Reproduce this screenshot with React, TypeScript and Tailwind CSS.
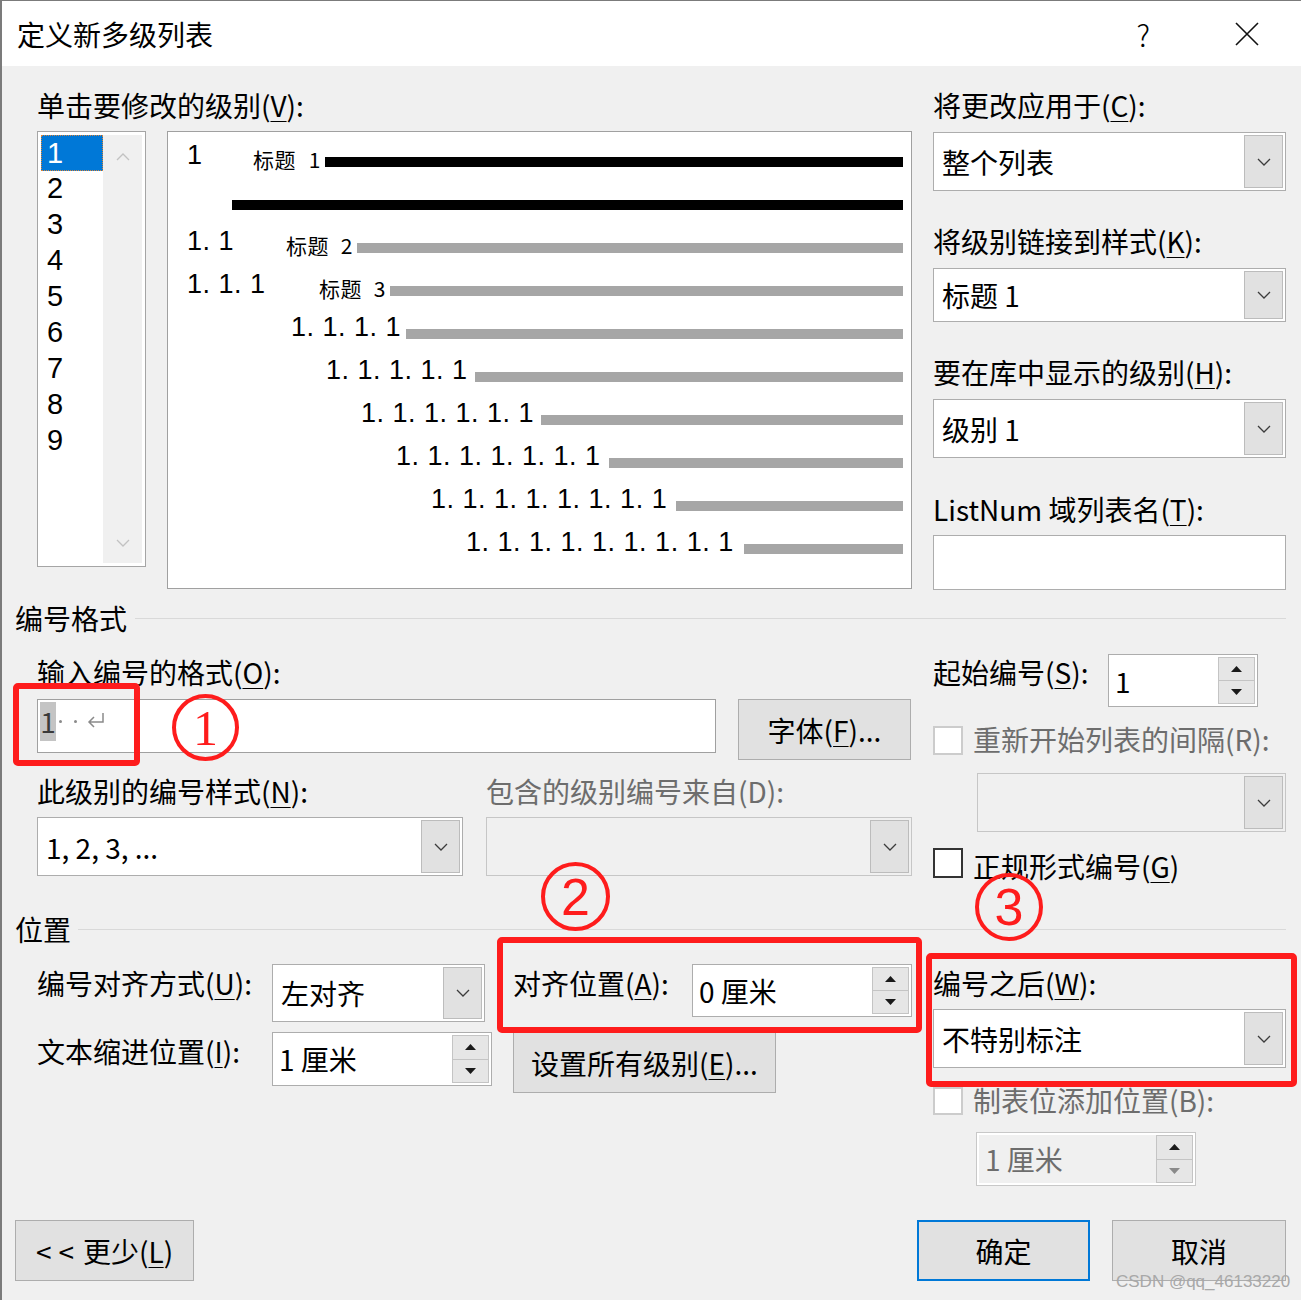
import React from "react";

const U = ({ children }: { children: React.ReactNode }) => (
  <span className="underline decoration-1 underline-offset-[4px]">{children}</span>
);

function Label({ children, className = "" }: { children: React.ReactNode; className?: string }) {
  return <div className={`h-[36px] text-[28px] leading-[34px] whitespace-nowrap ${className}`}>{children}</div>;
}

function Chevron({ up = false, color = "#3c3c3c" }: { up?: boolean; color?: string }) {
  return (
    <svg width="14" height="8" viewBox="0 0 14 8">
      <path d={up ? "M1 7 L7 1 L13 7" : "M1 1 L7 7 L13 1"} fill="none" stroke={color} strokeWidth="1.3" />
    </svg>
  );
}

function Tri({ up, color = "#1a1a1a" }: { up?: boolean; color?: string }) {
  return (
    <svg width="11" height="6" viewBox="0 0 11 6">
      <path d={up ? "M0 6 L5.5 0 L11 6Z" : "M0 0 L5.5 6 L11 0Z"} fill={color} />
    </svg>
  );
}

function Select({ value, className = "", disabled = false }: { value: string; className?: string; disabled?: boolean }) {
  return (
    <div className={`flex border ${disabled ? "border-[#c6c6c6] bg-[#f0f0f0]" : "border-[#adadad] bg-white"} ${className}`}>
      <div className="flex-1 flex items-center pl-[8px] text-[28px] whitespace-nowrap">{value}</div>
      <div className="m-[2px] w-[39px] flex items-center justify-center bg-[#e1e1e1] border border-[#bcbcbc]">
        <Chevron />
      </div>
    </div>
  );
}

function Spin({ value, className = "", disabled = false }: { value: string; className?: string; disabled?: boolean }) {
  return (
    <div className={`flex border bg-white ${disabled ? "border-[#c8c8c8] p-[2px]" : "border-[#adadad]"} ${className}`}>
      <div
        className={`flex-1 flex items-center pl-[6px] text-[28px] whitespace-nowrap ${
          disabled ? "bg-[#f0f0f0] text-[#6d6d6d]" : ""
        }`}
      >
        {value}
      </div>
      <div className={`w-[37px] flex flex-col ${disabled ? "" : "my-[2px] mr-[2px]"}`}>
        <div className="flex-1 flex items-center justify-center bg-[#e6e6e6] border border-[#c4c4c4]">
          <Tri up />
        </div>
        <div className="flex-1 flex items-center justify-center bg-[#e6e6e6] border border-t-0 border-[#c4c4c4]">
          <Tri color={disabled ? "#8a8a8a" : "#1a1a1a"} />
        </div>
      </div>
    </div>
  );
}

function Button({
  children,
  className = "",
  primary = false,
}: {
  children: React.ReactNode;
  className?: string;
  primary?: boolean;
}) {
  return (
    <div
      className={`flex items-center justify-center bg-[#e1e1e1] text-[28px] whitespace-nowrap ${
        primary ? "border-2 border-[#0078d7]" : "border border-[#adadad]"
      } ${className}`}
    >
      {children}
    </div>
  );
}

function Checkbox({ disabled = false, className = "" }: { disabled?: boolean; className?: string }) {
  return (
    <div
      className={`bg-white ${disabled ? "border-2 border-[#cccccc]" : "border-2 border-[#333333]"} ${className}`}
    />
  );
}

function SectionHeader({ title, className = "", lineGap = "ml-[8px]" }: { title: string; className?: string; lineGap?: string }) {
  return (
    <div className={`h-[36px] flex items-center ${className}`}>
      <span className="text-[28px] leading-[34px]">{title}</span>
      <div className={`flex-1 h-px bg-[#d9d9d9] ${lineGap}`} />
    </div>
  );
}

function Bar({ black = false }: { black?: boolean }) {
  return <div className={`flex-1 h-[10px] mt-[12px] ${black ? "bg-black" : "bg-[#a6a6a6]"}`} />;
}

function Preview() {
  const deep = [
    { pl: "pl-[123px]", w: "w-[115px]", t: "1. 1. 1. 1" },
    { pl: "pl-[158px]", w: "w-[149px]", t: "1. 1. 1. 1. 1" },
    { pl: "pl-[193px]", w: "w-[180px]", t: "1. 1. 1. 1. 1. 1" },
    { pl: "pl-[228px]", w: "w-[213px]", t: "1. 1. 1. 1. 1. 1. 1" },
    { pl: "pl-[263px]", w: "w-[245px]", t: "1. 1. 1. 1. 1. 1. 1. 1" },
    { pl: "pl-[298px]", w: "w-[278px]", t: "1. 1. 1. 1. 1. 1. 1. 1. 1" },
  ];
  return (
    <div className="w-[745px] h-[458px] border border-[#a0a0a0] bg-white pt-[2px] pr-[8px] font-['Liberation_Sans',sans-serif] text-[27px] tracking-[0.5px] whitespace-nowrap">
      <div className="h-[43px] flex items-center pl-[19px]">
        <span className="w-[66px] leading-none">1</span>
        <span className="w-[72px] mt-[8px] pr-[4px] flex justify-between text-[21px] leading-none font-['Noto_Sans_CJK_SC',sans-serif]">
          <span>标题</span>
          <span>1</span>
        </span>
        <Bar black />
      </div>
      <div className="h-[43px] flex items-center pl-[64px]">
        <Bar black />
      </div>
      <div className="h-[43px] flex items-center pl-[19px]">
        <span className="w-[99px] leading-none">1. 1</span>
        <span className="w-[71px] mt-[8px] pr-[4px] flex justify-between text-[21px] leading-none font-['Noto_Sans_CJK_SC',sans-serif]">
          <span>标题</span>
          <span>2</span>
        </span>
        <Bar />
      </div>
      <div className="h-[43px] flex items-center pl-[19px]">
        <span className="w-[132px] leading-none">1. 1. 1</span>
        <span className="w-[71px] mt-[8px] pr-[4px] flex justify-between text-[21px] leading-none font-['Noto_Sans_CJK_SC',sans-serif]">
          <span>标题</span>
          <span>3</span>
        </span>
        <Bar />
      </div>
      {deep.map((r) => (
        <div key={r.t} className={`h-[43px] flex items-center ${r.pl}`}>
          <span className={`${r.w} leading-none`}>{r.t}</span>
          <Bar />
        </div>
      ))}
    </div>
  );
}

function LevelList() {
  return (
    <div className="w-[109px] h-[436px] border border-[#a5a5a5] bg-white p-[3px] flex">
      <div className="w-[62px] bg-white font-['Liberation_Sans',sans-serif]">
        {["1", "2", "3", "4", "5", "6", "7", "8", "9"].map((n, i) => (
          <div
            key={n}
            className={`h-[36px] leading-[34px] text-[29px] ${
              i === 0 ? "pl-[5px] bg-[#0078d7] text-white border border-dotted border-[#d9853b]" : "pl-[6px]"
            }`}
          >
            {n}
          </div>
        ))}
      </div>
      <div className="flex-1 bg-[#f0f0f0] flex flex-col items-center justify-between pt-[18px] pb-[16px]">
        <Chevron up color="#c2c2c2" />
        <Chevron color="#c2c2c2" />
      </div>
    </div>
  );
}

export default function App() {
  return (
    <div className="relative w-[1301px] h-[1300px] overflow-hidden bg-[#f0f0f0] border-t border-l-2 border-[#7b7b7b] text-black font-['Noto_Sans_CJK_SC',sans-serif]">
      {/* Title bar */}
      <div className="h-[65px] bg-white flex items-center pl-[15px] pr-[41px]">
        <span className="text-[28px] leading-[34px]">定义新多级列表</span>
        <span className="ml-auto text-[30px] leading-none font-light">?</span>
        <svg className="ml-[84px]" width="26" height="24" viewBox="0 0 26 24">
          <path d="M2 1 L24 23 M24 1 L2 23" stroke="#111" strokeWidth="1.6" fill="none" />
        </svg>
      </div>

      <div className="pl-[13px] pr-[15px]">
        {/* Top: levels, preview, apply options */}
        <div className="flex pl-[22px] gap-[21px]">
          <div className="w-[875px]">
            <Label className="mt-[22px]">
              单击要修改的级别(<U>V</U>):
            </Label>
            <div className="mt-[7px] flex gap-[21px]">
              <LevelList />
              <Preview />
            </div>
          </div>
          <div className="w-[353px]">
            <Label className="mt-[22px]">
              将更改应用于(<U>C</U>):
            </Label>
            <Select className="mt-[8px] h-[59px]" value="整个列表" />
            <Label className="mt-[33px]">
              将级别链接到样式(<U>K</U>):
            </Label>
            <Select className="mt-[8px] h-[54px]" value="标题 1" />
            <Label className="mt-[33px]">
              要在库中显示的级别(<U>H</U>):
            </Label>
            <Select className="mt-[8px] h-[59px]" value="级别 1" />
            <Label className="mt-[34px]">
              ListNum 域列表名(<U>T</U>):
            </Label>
            <div className="mt-[7px] h-[55px] border border-[#adadad] bg-white" />
          </div>
        </div>

        <SectionHeader title="编号格式" className="mt-[10px]" />

        {/* Number format */}
        <div className="flex pl-[22px] gap-[21px]">
          <div className="w-[875px]">
            <Label className="mt-[19px]">
              输入编号的格式(<U>O</U>):
            </Label>
            <div className="mt-[8px] flex items-start gap-[22px]">
              <div className="w-[679px] h-[54px] border border-[#a0a0a0] bg-white flex items-start pt-[2px] pl-[2px]">
                <span className="w-[16px] h-[39px] bg-[#c4c4c4] text-[#3a3a3a] text-[28px] leading-[38px] text-center">1</span>
                <span className="ml-[3px] mt-[18px] w-[3px] h-[3px] rounded-full bg-[#8a8a8a]" />
                <span className="ml-[12px] mt-[18px] w-[3px] h-[3px] rounded-full bg-[#8a8a8a]" />
                <svg className="ml-[10px] mt-[10px]" width="18" height="16" viewBox="0 0 18 16">
                  <path d="M16 1 V10 H2 M7 5 L2 10 L7 15" fill="none" stroke="#8a8a8a" strokeWidth="1.5" />
                </svg>
              </div>
              <Button className="w-[173px] h-[61px]">
                字体(<U>F</U>)...
              </Button>
            </div>
            <div className="mt-[14px] grid grid-cols-2 gap-x-[23px]">
              <Label>
                此级别的编号样式(<U>N</U>):
              </Label>
              <Label className="text-[#6d6d6d]">包含的级别编号来自(D):</Label>
              <Select className="mt-[7px] h-[59px]" value="1, 2, 3, ..." />
              <Select disabled className="mt-[7px] h-[59px]" value="" />
            </div>
          </div>
          <div className="w-[353px]">
            <div className="mt-[18px] flex items-start">
              <Label className="mt-[1px] w-[175px]">
                起始编号(<U>S</U>):
              </Label>
              <Spin className="w-[150px] h-[53px]" value="1" />
            </div>
            <div className="mt-[15px] flex items-center">
              <Checkbox disabled className="w-[30px] h-[29px]" />
              <Label className="ml-[10px] text-[#6d6d6d]">重新开始列表的间隔(R):</Label>
            </div>
            <Select disabled className="mt-[15px] ml-[44px] w-[309px] h-[59px]" value="" />
            <div className="mt-[16px] flex items-start">
              <Checkbox className="w-[30px] h-[30px]" />
              <Label className="ml-[10px] mt-[1px]">
                正规形式编号(<U>G</U>)
              </Label>
            </div>
          </div>
        </div>

        <SectionHeader title="位置" className="mt-[26px]" lineGap="ml-[7px]" />

        {/* Position */}
        <div className="flex pl-[22px] gap-[21px]">
          <div className="w-[875px]">
            <div className="mt-[17px] flex items-start">
              <Label className="mt-[2px] w-[235px]">
                编号对齐方式(<U>U</U>):
              </Label>
              <Select className="w-[213px] h-[58px]" value="左对齐" />
              <Label className="ml-[28px] mt-[2px] w-[179px]">
                对齐位置(<U>A</U>):
              </Label>
              <Spin className="w-[220px] h-[53px]" value="0 厘米" />
            </div>
            <div className="mt-[10px] flex items-start">
              <Label className="mt-[2px] w-[235px]">
                文本缩进位置(<U>I</U>):
              </Label>
              <Spin className="w-[220px] h-[54px]" value="1 厘米" />
              <Button className="ml-[21px] w-[263px] h-[61px]">
                设置所有级别(<U>E</U>)...
              </Button>
            </div>
          </div>
          <div className="w-[354px]">
            <Label className="mt-[19px]">
              编号之后(<U>W</U>):
            </Label>
            <Select className="mt-[7px] h-[59px]" value="不特别标注" />
            <div className="mt-[15px] flex items-center">
              <Checkbox disabled className="w-[30px] h-[28px]" />
              <Label className="ml-[10px] text-[#6d6d6d]">制表位添加位置(B):</Label>
            </div>
            <Spin disabled className="mt-[13px] ml-[43px] w-[220px] h-[54px]" value="1 厘米" />
          </div>
        </div>

        {/* Footer buttons */}
        <div className="mt-[34px] flex">
          <Button className="w-[179px] h-[61px]">
            <span className="tracking-[7px]">&lt;&lt;</span>
            <span className="ml-[2px]">
              更少(<U>L</U>)
            </span>
          </Button>
          <Button primary className="ml-auto w-[173px] h-[61px]">
            确定
          </Button>
          <Button className="ml-[22px] w-[174px] h-[61px]">取消</Button>
        </div>
      </div>

      {/* Annotations drawn over the dialog */}
      <div className="absolute left-[11px] top-[682px] w-[127px] h-[83px] border-[6px] border-[#fe1c1c] rounded-[5px]" />
      <div className="absolute left-[495px] top-[936px] w-[425px] h-[96px] border-[6px] border-[#fe1c1c] rounded-[5px]" />
      <div className="absolute left-[924px] top-[952px] w-[371px] h-[134px] border-[6px] border-[#fe1c1c] rounded-[5px]" />
      <div className="absolute left-[170px] top-[693px] w-[67px] h-[67px] rounded-full border-[4px] border-[#fe1c1c] flex items-center justify-center text-[#fe1c1c] text-[50px] leading-none font-['Liberation_Serif',serif]">
        1
      </div>
      <div className="absolute left-[539px] top-[861px] w-[69px] h-[69px] rounded-full border-[4px] border-[#fe1c1c] flex items-center justify-center text-[#fe1c1c] text-[52px] leading-none font-['Liberation_Sans',sans-serif]">
        2
      </div>
      <div className="absolute left-[973px] top-[872px] w-[68px] h-[68px] rounded-full border-[4px] border-[#fe1c1c] flex items-center justify-center text-[#fe1c1c] text-[52px] leading-none font-['Liberation_Sans',sans-serif]">
        3
      </div>
      <div className="absolute left-[1114px] top-[1271px] text-[17px] leading-[20px] text-[#a8a8a8] font-['Liberation_Sans',sans-serif] whitespace-nowrap">
        CSDN @qq_46133220
      </div>
    </div>
  );
}
